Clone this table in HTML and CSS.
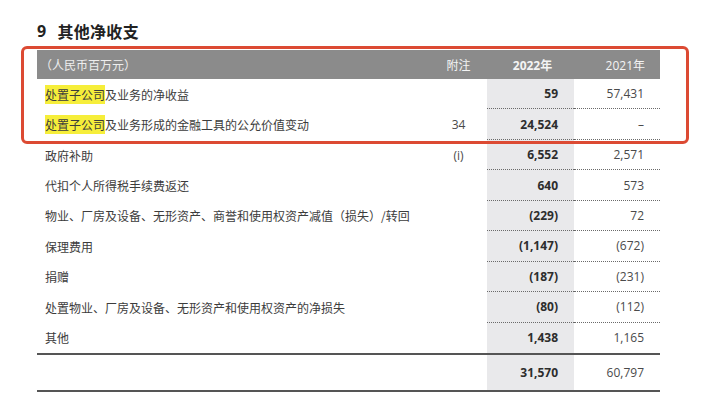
FILE: index.html
```html
<!DOCTYPE html>
<html lang="zh">
<head>
<meta charset="utf-8">
<link rel="stylesheet" href="styles.css">
</head>
<body>
<div class="page">
  <h1 class="title"><span class="num">9</span>其他净收支</h1>
  <div class="table">
    <div class="row head">
      <div class="c label">（人民币百万元）</div>
      <div class="c note">附注</div>
      <div class="c y22">2022年</div>
      <div class="c y21">2021年</div>
    </div>
    <div class="row">
      <div class="c label"><span class="hl">处置子公司</span>及业务的净收益</div>
      <div class="c note"></div>
      <div class="c y22 dot">59</div>
      <div class="c y21 dot">57,431</div>
    </div>
    <div class="row">
      <div class="c label"><span class="hl">处置子公司</span>及业务形成的金融工具的公允价值变动</div>
      <div class="c note">34</div>
      <div class="c y22 dot">24,524</div>
      <div class="c y21 dot">–</div>
    </div>
    <div class="row">
      <div class="c label">政府补助</div>
      <div class="c note">(i)</div>
      <div class="c y22 dot">6,552</div>
      <div class="c y21 dot">2,571</div>
    </div>
    <div class="row">
      <div class="c label">代扣个人所得税手续费返还</div>
      <div class="c note"></div>
      <div class="c y22 dot">640</div>
      <div class="c y21 dot">573</div>
    </div>
    <div class="row">
      <div class="c label">物业、厂房及设备、无形资产、商誉和使用权资产减值（损失）/转回</div>
      <div class="c note"></div>
      <div class="c y22 dot">(229)</div>
      <div class="c y21 dot">72</div>
    </div>
    <div class="row">
      <div class="c label">保理费用</div>
      <div class="c note"></div>
      <div class="c y22 dot">(1,147)</div>
      <div class="c y21 dot">(672)</div>
    </div>
    <div class="row">
      <div class="c label">捐赠</div>
      <div class="c note"></div>
      <div class="c y22 dot">(187)</div>
      <div class="c y21 dot">(231)</div>
    </div>
    <div class="row">
      <div class="c label">处置物业、厂房及设备、无形资产和使用权资产的净损失</div>
      <div class="c note"></div>
      <div class="c y22 dot">(80)</div>
      <div class="c y21 dot">(112)</div>
    </div>
    <div class="row last">
      <div class="c label">其他</div>
      <div class="c note"></div>
      <div class="c y22">1,438</div>
      <div class="c y21">1,165</div>
    </div>
    <div class="row total">
      <div class="c label"></div>
      <div class="c note"></div>
      <div class="c y22">31,570</div>
      <div class="c y21">60,797</div>
    </div>
  </div>
  <div class="mark"></div>
</div>
</body>
</html>
```
FILE: styles.css
```css
html, body {
  margin: 0;
  padding: 0;
  background: #ffffff;
}
body {
  font-family: "Open Sans", "Noto Sans CJK SC", sans-serif;
  color: #3a3a3a;
}
.page {
  position: relative;
  width: 705px;
  height: 399px;
  padding: 0 0 0 37px;
  box-sizing: border-box;
}
.title {
  margin: 0;
  height: 50px;
  display: flex;
  align-items: center;
  padding-top: 12px;
  box-sizing: border-box;
  font-family: "Open Sans", "Noto Sans CJK SC", sans-serif;
  font-size: 16px;
  font-weight: 700;
  color: #222222;
  letter-spacing: 0.3px;
}
.title .num {
  margin-right: 11px;
}
.table {
  width: 623px;
}
.row {
  display: grid;
  grid-template-columns: 393px 57px 87px 86px;
  height: 30.45px;
  font-size: 12px;
}
.c {
  display: flex;
  align-items: center;
  box-sizing: border-box;
  white-space: nowrap;
}
.label {
  padding-left: 8px;
  font-family: "Noto Sans CJK SC", sans-serif;
  font-weight: 400;
  color: #3c3c3c;
}
.note {
  justify-content: center;
  color: #4a4a4a;
  font-weight: 400;
}
.y22 {
  justify-content: flex-end;
  padding-right: 16px;
  background: #e9e9eb;
  font-weight: 700;
  color: #2d2d2d;
}
.y21 {
  justify-content: flex-end;
  padding-right: 16px;
  color: #4a4a4a;
  font-weight: 400;
}
.dot {
  border-bottom: 1px dotted #6a6a6a;
}
.head {
  height: 29px;
  background: #8b8b8b;
}
.head .c {
  color: #f4f4f4;
  background: transparent;
}
.head .label {
  padding-left: 3px;
  color: #eeeeee;
}
.head .note {
  font-family: "Noto Sans CJK SC", sans-serif;
  justify-content: center;
}
.head .y22 {
  font-weight: 700;
  justify-content: center;
  padding-right: 0;
  padding-left: 4px;
}
.head .y21 {
  justify-content: flex-end;
  padding-right: 15px;
}
.hl {
  background: #f6ee3a;
  padding: 1px 0;
}
.last {
  border-bottom: 2px solid #555555;
}
.total {
  height: 35px;
  border-bottom: 2px solid #555555;
}
.mark {
  position: absolute;
  left: 21px;
  top: 46px;
  width: 668px;
  height: 98px;
  box-sizing: border-box;
  border: 3px solid #dc4a33;
  border-radius: 6px;
  pointer-events: none;
}
```
